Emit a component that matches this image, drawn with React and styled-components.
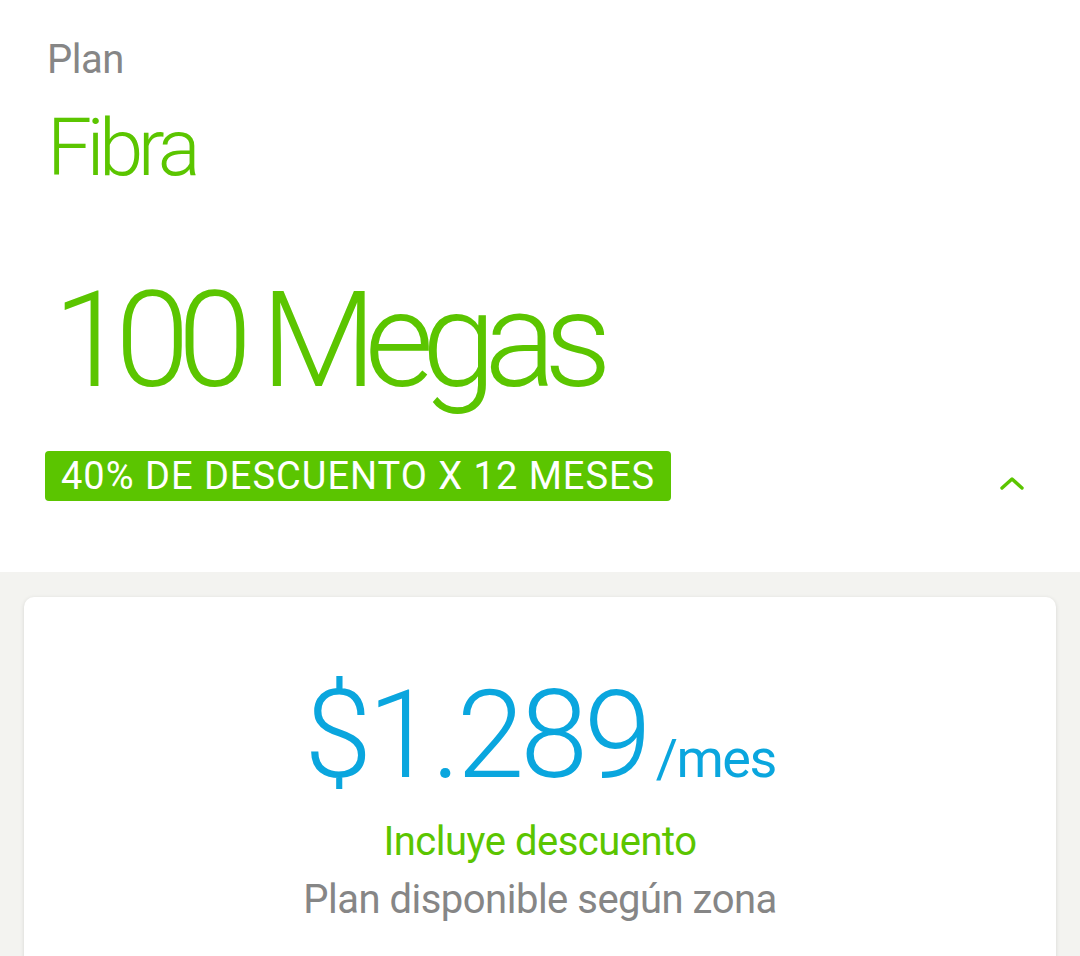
import React from 'react';
import styled, { createGlobalStyle } from 'styled-components';

const GREEN = '#5bc500';
const BLUE = '#0aa6de';
const GRAY = '#868686';

const GlobalStyle = createGlobalStyle`
  html, body {
    margin: 0;
    padding: 0;
    background: #f3f3f0;
  }
  body {
    font-family: Roboto, "Noto Sans", sans-serif;
    -webkit-font-smoothing: antialiased;
  }
`;

const Page = styled.div`
  width: 1080px;
  height: 956px;
  overflow: hidden;
`;

const Header = styled.section`
  background: #ffffff;
  height: 572px;
  box-sizing: border-box;
  padding: 36px 45px 0 45px;
  display: flex;
  flex-direction: column;
`;

const Label = styled.div`
  font-size: 40px;
  line-height: 48px;
  color: ${GRAY};
  padding-left: 2px;
  letter-spacing: -0.5px;
`;

const PlanName = styled.div`
  font-size: 80px;
  line-height: 90px;
  font-weight: 300;
  color: ${GREEN};
  margin-top: 19px;
  padding-left: 2px;
  letter-spacing: -5.5px;
`;

const Speed = styled.div`
  font-size: 134px;
  line-height: 150px;
  font-weight: 300;
  color: ${GREEN};
  margin-top: 73px;
  padding-left: 8px;
  letter-spacing: -12px;
  word-spacing: 0;
`;

const BadgeRow = styled.div`
  display: flex;
  align-items: center;
  justify-content: space-between;
  margin-top: 35px;
`;

const Badge = styled.div`
  background: ${GREEN};
  color: #ffffff;
  border-radius: 4px;
  height: 50px;
  box-sizing: border-box;
  padding: 0 16px;
  display: flex;
  align-items: center;
  font-size: 38px;
  letter-spacing: 1px;
  white-space: nowrap;
`;

const Toggle = styled.button`
  background: none;
  border: 0;
  padding: 0;
  margin-right: 10px;
  margin-top: 14px;
  display: flex;
  cursor: pointer;
`;

const Body = styled.section`
  padding: 25px 24px 0 24px;
`;

const Card = styled.div`
  background: #ffffff;
  border-radius: 10px;
  box-shadow: 0 1px 4px rgba(0, 0, 0, 0.12);
  min-height: 420px;
  padding-top: 74px;
  display: flex;
  flex-direction: column;
  align-items: center;
`;

const Price = styled.div`
  display: flex;
  align-items: baseline;
  color: ${BLUE};
`;

const Amount = styled.span`
  font-size: 122px;
  line-height: 130px;
  font-weight: 300;
  letter-spacing: -4px;
`;

const Period = styled.span`
  font-size: 54px;
  margin-left: 8px;
  letter-spacing: -1.5px;
`;

const Note = styled.div`
  font-size: 40px;
  line-height: 58px;
  color: ${({ $accent }) => ($accent ? GREEN : GRAY)};
  letter-spacing: -0.5px;
  margin-top: ${({ $accent }) => ($accent ? '12px' : '0')};
`;

const ChevronUp = () => (
  <svg width="26" height="16" viewBox="0 0 26 16" fill="none">
    <path d="M3 13 L13 4 L23 13" stroke={GREEN} strokeWidth="3.4" strokeLinecap="round" strokeLinejoin="round" />
  </svg>
);

const App = () => (
  <Page>
    <GlobalStyle />
    <Header>
      <Label>Plan</Label>
      <PlanName>Fibra</PlanName>
      <Speed>100 Megas</Speed>
      <BadgeRow>
        <Badge>40% DE DESCUENTO X 12 MESES</Badge>
        <Toggle aria-label="Contraer">
          <ChevronUp />
        </Toggle>
      </BadgeRow>
    </Header>
    <Body>
      <Card>
        <Price>
          <Amount>$1.289</Amount>
          <Period>/mes</Period>
        </Price>
        <Note $accent>Incluye descuento</Note>
        <Note>Plan disponible según zona</Note>
      </Card>
    </Body>
  </Page>
);

export default App;
